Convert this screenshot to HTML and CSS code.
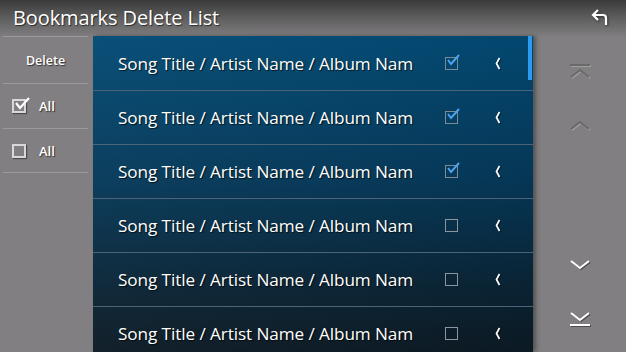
FILE: index.html
```html
<!DOCTYPE html>
<html>
<head>
<meta charset="utf-8">
<link rel="stylesheet" href="styles.css">
</head>
<body>
<div class="screen">
  <header class="header">
    <h1 class="title">Bookmarks Delete List</h1>
    <svg class="back" width="20" height="18" viewBox="0 0 20 18">
      <path d="M3 6 H13 Q16 6 16 9 V16" fill="none" stroke="#fff" stroke-width="2.2"/>
      <path d="M8 1 L3 6 L8 11" fill="none" stroke="#fff" stroke-width="2.2"/>
    </svg>
  </header>
  <div class="body">
    <aside class="side">
      <div class="side-item delete">Delete</div>
      <div class="side-item opt">
        <span class="sbox"><svg width="18" height="16" viewBox="0 0 18 16"><path d="M3 7 L7 12 L16 2" fill="none" stroke="#fff" stroke-width="2.2"/></svg></span>
        <span>All</span>
      </div>
      <div class="side-item opt">
        <span class="sbox"></span>
        <span>All</span>
      </div>
    </aside>
    <main class="list">
      <div class="scroll"></div>
      <div class="row"><span class="txt">Song Title / Artist Name / Album Nam</span><span class="cb on"><svg width="16" height="14" viewBox="0 0 16 14"><path d="M3 6 L6 10 L14 1" fill="none" stroke="#4ea3f0" stroke-width="2"/></svg></span><svg class="chev" width="8" height="13" viewBox="0 0 8 13"><path d="M5.5 1 L2.5 6.5 L5.5 12" fill="none" stroke="#fff" stroke-width="1.7"/></svg></div>
      <div class="row"><span class="txt">Song Title / Artist Name / Album Nam</span><span class="cb on"><svg width="16" height="14" viewBox="0 0 16 14"><path d="M3 6 L6 10 L14 1" fill="none" stroke="#4ea3f0" stroke-width="2"/></svg></span><svg class="chev" width="8" height="13" viewBox="0 0 8 13"><path d="M5.5 1 L2.5 6.5 L5.5 12" fill="none" stroke="#fff" stroke-width="1.7"/></svg></div>
      <div class="row"><span class="txt">Song Title / Artist Name / Album Nam</span><span class="cb on"><svg width="16" height="14" viewBox="0 0 16 14"><path d="M3 6 L6 10 L14 1" fill="none" stroke="#4ea3f0" stroke-width="2"/></svg></span><svg class="chev" width="8" height="13" viewBox="0 0 8 13"><path d="M5.5 1 L2.5 6.5 L5.5 12" fill="none" stroke="#fff" stroke-width="1.7"/></svg></div>
      <div class="row"><span class="txt">Song Title / Artist Name / Album Nam</span><span class="cb"></span><svg class="chev" width="8" height="13" viewBox="0 0 8 13"><path d="M5.5 1 L2.5 6.5 L5.5 12" fill="none" stroke="#fff" stroke-width="1.7"/></svg></div>
      <div class="row"><span class="txt">Song Title / Artist Name / Album Nam</span><span class="cb"></span><svg class="chev" width="8" height="13" viewBox="0 0 8 13"><path d="M5.5 1 L2.5 6.5 L5.5 12" fill="none" stroke="#fff" stroke-width="1.7"/></svg></div>
      <div class="row"><span class="txt">Song Title / Artist Name / Album Nam</span><span class="cb"></span><svg class="chev" width="8" height="13" viewBox="0 0 8 13"><path d="M5.5 1 L2.5 6.5 L5.5 12" fill="none" stroke="#fff" stroke-width="1.7"/></svg></div>
    </main>
    <nav class="nav">
      <svg class="nbtn dim" width="24" height="16" viewBox="0 0 24 16"><path d="M2 2 H22" stroke="#6a696a" stroke-width="2"/><path d="M3 14 L12 7 L21 14" fill="none" stroke="#6a696a" stroke-width="2"/></svg>
      <svg class="nbtn dim" width="24" height="12" viewBox="0 0 24 12"><path d="M3 10 L12 3 L21 10" fill="none" stroke="#6a696a" stroke-width="2"/></svg>
      <span class="gap"></span>
      <svg class="nbtn" width="24" height="12" viewBox="0 0 24 12"><path d="M3 2 L12 9 L21 2" fill="none" stroke="#fff" stroke-width="2"/></svg>
      <svg class="nbtn" width="24" height="16" viewBox="0 0 24 16"><path d="M3 2 L12 9 L21 2" fill="none" stroke="#fff" stroke-width="2"/><path d="M2 14 H22" stroke="#fff" stroke-width="2"/></svg>
    </nav>
  </div>
</div>
</body>
</html>
```

FILE: styles.css
```css
* { box-sizing: border-box; margin: 0; padding: 0; }
html, body { width: 626px; height: 352px; overflow: hidden; }
body { background: #817f81; font-family: "Open Sans", "Noto Sans", sans-serif; color: #fff; }
.screen { width: 626px; height: 352px; display: flex; flex-direction: column; }
.header {
  height: 36px; flex: none;
  background: linear-gradient(#3a3a3a, #5f5e5f 50%, #7e7c7e);
  display: flex; align-items: center; justify-content: space-between;
  padding: 0 16px 0 13px;
}
.title { font-size: 20px; font-weight: 400; letter-spacing: -0.1px; text-shadow: 1px 1px 1px rgba(0,0,0,0.6); margin-top: -1px; }
.back { margin-top: -1px; filter: drop-shadow(1px 1px 1px rgba(0,0,0,0.5)); }
.body { flex: 1; display: flex; min-height: 0; }
.side { width: 93px; flex: none; padding: 0 5px 0 3px; }
.side-item { border-top: 1px solid #9a989a; display: flex; align-items: center; text-shadow: 1px 1px 1px rgba(0,0,0,0.6); }
.side-item:last-child { border-bottom: 1px solid #9a989a; }
.delete { height: 47px; justify-content: center; font-size: 12.5px; font-weight: 600; }
.opt { height: 45px; padding-left: 9px; gap: 13px; font-size: 13px; font-weight: 600; }
.sbox { width: 14px; height: 14px; border: 2px solid #d8d8d8; position: relative; flex: none; box-shadow: 1px 1px 1px rgba(0,0,0,0.4); }
.sbox svg { position: absolute; left: -1px; top: -5px; }
.list {
  width: 440px; flex: none; position: relative; overflow: hidden; padding-top: 1px;
  background: linear-gradient(100deg, rgba(255,255,255,0.03), rgba(0,0,0,0.05)), linear-gradient(#024a74, #05395a 45%, #0a2435 80%, #0c1a24);
  box-shadow: 3px 0 4px rgba(0,0,0,0.35);
}
.scroll { position: absolute; right: 1px; top: 0; width: 4px; height: 44px; background: #2b9bf2; }
.row { height: 54px; border-bottom: 1px solid #4b6477; display: flex; align-items: center; padding-left: 25px; }
.txt { width: 327px; font-size: 17.2px; letter-spacing: -0.1px; white-space: nowrap; text-shadow: 1px 1px 1px rgba(0,0,0,0.7); }
.cb { width: 13px; height: 13px; border: 1.5px solid #8a959d; position: relative; flex: none; }
.cb.on { border-color: #7f8b94; }
.cb svg { position: absolute; left: -1px; top: -4px; }
.chev { margin-left: 36px; flex: none; filter: drop-shadow(1px 1px 0 rgba(0,0,0,0.5)); }
.nav { flex: 1; display: flex; flex-direction: column; align-items: center; padding-top: 27px; }
.nbtn { flex: none; filter: drop-shadow(1px 1px 0 rgba(0,0,0,0.4)); }
.nbtn.dim { filter: drop-shadow(1px 1px 0 rgba(255,255,255,0.25)); }
.nav .nbtn:nth-child(2) { margin-top: 40px; }
.gap { height: 128px; flex: none; }
.nav .nbtn:nth-child(5) { margin-top: 40px; }
```
